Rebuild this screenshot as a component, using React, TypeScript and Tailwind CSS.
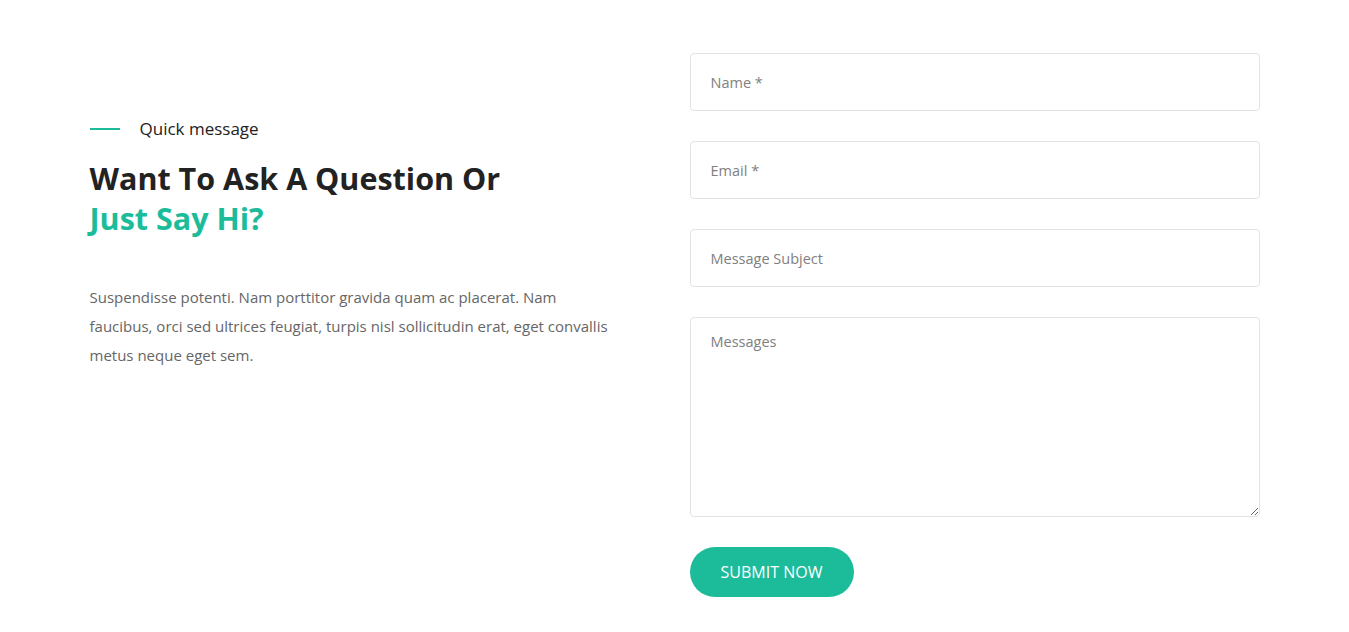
const App = () => {
    return (
        <div className="min-h-[632px] bg-white font-['Open_Sans','Lato',sans-serif]">
            <div className="mx-auto w-[1170px] pt-[53px] pb-[35px] flex">
                <div className="w-[600px] pr-[30px] pt-[63px]">
                    <div className="flex items-center gap-5">
                        <span className="block w-[30px] h-[2px] bg-[#1cbc9b]" />
                        <span className="text-[17px] font-medium text-[#222]">Quick message</span>
                    </div>
                    <h2 className="mt-[16px] text-[30.5px] leading-[40px] font-bold text-[#222]">
                        Want To Ask A Question Or
                        <br />
                        <span className="text-[#1cbc9b]">Just Say Hi?</span>
                    </h2>
                    <p className="mt-[45px] text-[15px] leading-[29px] text-[#666]">
                        Suspendisse potenti. Nam porttitor gravida quam ac placerat. Nam
                        <br />
                        faucibus, orci sed ultrices feugiat, turpis nisl sollicitudin erat, eget convallis
                        <br />
                        metus neque eget sem.
                    </p>
                </div>
                <form className="w-[570px] flex flex-col" onSubmit={(e) => e.preventDefault()}>
                    <input
                        type="text"
                        placeholder="Name *"
                        className="h-[58px] px-5 rounded border border-[#e3e3e3] text-[14.5px] text-[#333] placeholder:text-[#808080] outline-none"
                    />
                    <input
                        type="email"
                        placeholder="Email *"
                        className="mt-[30px] h-[58px] px-5 rounded border border-[#e3e3e3] text-[14.5px] text-[#333] placeholder:text-[#808080] outline-none"
                    />
                    <input
                        type="text"
                        placeholder="Message Subject"
                        className="mt-[30px] h-[58px] px-5 rounded border border-[#e3e3e3] text-[14.5px] text-[#333] placeholder:text-[#808080] outline-none"
                    />
                    <textarea
                        placeholder="Messages"
                        className="mt-[30px] h-[200px] px-5 py-[13px] rounded border border-[#e3e3e3] text-[14.5px] text-[#333] placeholder:text-[#808080] outline-none"
                    />
                    <div className="mt-[30px]">
                        <button
                            type="submit"
                            className="h-[50px] w-[164px] rounded-full bg-[#1cbc9b] text-white text-[16px] font-normal uppercase"
                        >
                            Submit Now
                        </button>
                    </div>
                </form>
            </div>
        </div>
    );
};

export default App;
